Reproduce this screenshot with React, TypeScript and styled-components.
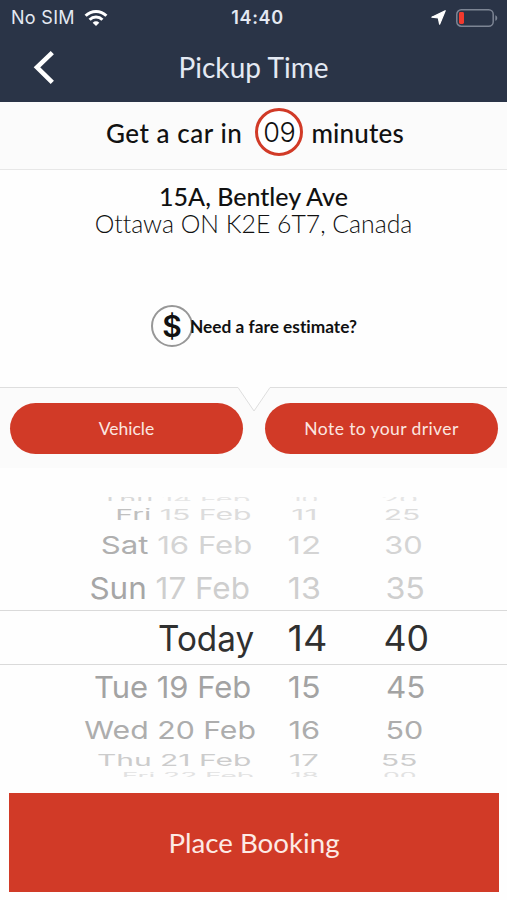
import React from 'react';
import styled, { createGlobalStyle } from 'styled-components';

const RED = '#d13a27';
const NAVY = '#2a3447';

const GlobalStyle = createGlobalStyle`
  * { box-sizing: border-box; }
  body { margin: 0; background: #fff; font-family: Lato, sans-serif; color: #111; }
  button { border: 0; font-family: inherit; cursor: pointer; }
`;

const Screen = styled.main`
  width: 507px;
  height: 900px;
  overflow: hidden;
  display: flex;
  flex-direction: column;
  background: #fefefe;
`;

const StatusBar = styled.div`
  height: 34px;
  flex: none;
  display: grid;
  grid-template-columns: 1fr auto 1fr;
  align-items: center;
  padding: 0 9px 0 11px;
  background: ${NAVY};
  color: #e4e9f2;
  font-family: Inter, sans-serif;
  font-size: 18px;
  line-height: 34px;
`;

const Carrier = styled.div`
  display: flex;
  align-items: center;
  gap: 9px;
  padding-top: 1px;
  letter-spacing: 0.3px;
`;

const Clock = styled.div`
  padding: 1px 0 0 6px;
  font-weight: 600;
  letter-spacing: 0.7px;
`;

const Indicators = styled.div`
  display: flex;
  justify-content: flex-end;
  align-items: center;
  gap: 10px;
`;

const NavBar = styled.header`
  height: 68px;
  flex: none;
  display: grid;
  grid-template-columns: 88px 1fr 88px;
  align-items: center;
  background: ${NAVY};
`;

const BackButton = styled.button`
  display: flex;
  padding: 0 0 0 32px;
  background: none;
`;

const Title = styled.h1`
  margin: 0;
  padding-bottom: 2px;
  text-align: center;
  font-size: 28px;
  font-weight: 400;
  line-height: 34px;
  letter-spacing: 0.05px;
  color: #e4e9f3;
`;

const EtaBar = styled.section`
  height: 68px;
  flex: none;
  display: flex;
  justify-content: center;
  padding: 6px 0 0 3px;
  background: #fbfbfb;
  border-bottom: 1px solid #e7e7e7;
  font-size: 26px;
  font-weight: 500;
  line-height: 50px;
`;

const EtaText = styled.span<{ $spacing: number }>`
  letter-spacing: ${(p) => p.$spacing}px;
`;

const EtaBadge = styled.span`
  width: 48px;
  height: 48px;
  margin: 0 8px 0 13px;
  border: 3px solid ${RED};
  border-radius: 50%;
  background: #fff;
  font-family: Inter, sans-serif;
  font-size: 27px;
  font-weight: 300;
  line-height: 43px;
  letter-spacing: -0.3px;
  text-align: center;
`;

const Address = styled.address`
  height: 117px;
  flex: none;
  padding-top: 12px;
  text-align: center;
  font-style: normal;
  font-size: 25px;
  line-height: 28px;
`;

const Street = styled.div`
  font-weight: 500;
`;

const City = styled.div`
  font-size: 24.8px;
  font-weight: 300;
  color: #111;
  font-variant-ligatures: none;
`;

const Fare = styled.button`
  height: 80px;
  flex: none;
  display: flex;
  justify-content: center;
  align-items: center;
  padding: 0 0 2px 1px;
  background: none;
  color: #111;
  font-size: 17.3px;
  font-weight: 700;
  font-variant-ligatures: none;
`;

const FareCoin = styled.span`
  width: 42px;
  height: 42px;
  margin-right: -3px;
  border: 2px solid #979797;
  border-radius: 50%;
  font-family: Inter, sans-serif;
  font-size: 30px;
  font-weight: 600;
  line-height: 39px;
  text-align: center;
`;

const Options = styled.section`
  height: 81px;
  margin-top: 20px;
  flex: none;
  background: #fbfbfb;
`;

const Notch = styled.svg`
  display: block;
  width: 507px;
  height: 26px;
`;

const OptionRow = styled.div`
  display: flex;
  gap: 22px;
  margin-top: -10px;
  padding: 0 9px 0 10px;
`;

const Pill = styled.button<{ $spacing?: string }>`
  flex: 1;
  height: 51px;
  padding: 0;
  border-radius: 26px;
  background: ${RED};
  color: #fbe6e0;
  font-size: 17.5px;
  letter-spacing: ${(p) => p.$spacing ?? '0'};
`;

const Picker = styled.section`
  height: 280px;
  flex: none;
  margin-top: 29px;
  overflow: hidden;
  font-family: Inter, sans-serif;
`;

const PickerRow = styled.div<{ $height: number; $offset?: number; $selected?: boolean }>`
  height: ${(p) => p.$height}px;
  padding-top: ${(p) => p.$offset ?? 0}px;
  display: grid;
  grid-template-columns: 254px 101px 101px;
  align-items: center;
  overflow: hidden;
  white-space: nowrap;
  font-size: ${(p) => (p.$selected ? 35 : 28)}px;
  line-height: 0;
  border: solid #dadada;
  border-width: ${(p) => (p.$selected ? '1px 0' : '0')};
`;

const DateCell = styled.span<{ $x: number; $y: number; $inset: number; $color: string }>`
  justify-self: end;
  margin-right: ${(p) => p.$inset}px;
  transform: scale(${(p) => p.$x}, ${(p) => p.$y});
  transform-origin: right center;
  color: ${(p) => p.$color};
`;

const Day = styled.span<{ $color: string }>`
  color: ${(p) => p.$color};
`;

const NumberCell = styled.span<{ $x: number; $y: number; $shift?: number; $color: string }>`
  justify-self: center;
  margin-left: ${(p) => p.$shift ?? 0}px;
  transform: scale(${(p) => p.$x}, ${(p) => p.$y});
  color: ${(p) => p.$color};
`;

const BookButton = styled.button`
  height: 99px;
  flex: none;
  margin: 16px 8px 0 9px;
  padding: 1px 0 0;
  background: ${RED};
  color: #fdeae5;
  font-size: 27.7px;
  line-height: 34px;
`;

type Slot = {
  day: string; date: string; hour: string; minute: string;
  height: number; offset?: number; x: number; y: number; inset: number;
  hx: number; hShift?: number; mx: number; mShift: number;
  dayColor: string; color: string; selected?: boolean;
};

const slots: Slot[] = [
  { day: 'Thu', date: '14 Feb', hour: '10', minute: '20', height: 4, x: 1.03, y: 0.36, inset: 4, hx: 0.95, mx: 1.08, mShift: -12, dayColor: '#d8d8d8', color: '#e6e6e6' },
  { day: 'Fri', date: '15 Feb', hour: '11', minute: '25', height: 28, x: 1.077, y: 0.54, inset: 2, hx: 1.15, mx: 1.07, mShift: -7, dayColor: '#c0c0c0', color: '#dcdcdc' },
  { day: 'Sat', date: '16 Feb', hour: '12', minute: '30', height: 32, x: 1.112, y: 0.87, inset: 2, hx: 1.18, mx: 1.1, mShift: -4, dayColor: '#afafaf', color: '#d4d4d4' },
  { day: 'Sun', date: '17 Feb', hour: '13', minute: '35', height: 49, offset: 5, x: 1.123, y: 1.08, inset: 4, hx: 1.15, mx: 1.15, mShift: 0, dayColor: '#a6a6a6', color: '#cecece' },
  { day: 'Today', date: '', hour: '14', minute: '40', height: 55, x: 0.95, y: 1, inset: 0, hx: 1.08, hShift: 5, mx: 1.02, mShift: 1, dayColor: '#303030', color: '#303030', selected: true },
  { day: 'Tue', date: '19 Feb', hour: '15', minute: '45', height: 44, x: 1.105, y: 1.08, inset: 3, hx: 1.15, mx: 1.12, mShift: 0, dayColor: '#a3a3a3', color: '#a3a3a3' },
  { day: 'Wed', date: '20 Feb', hour: '16', minute: '50', height: 42, x: 1.08, y: 0.88, inset: -2, hx: 1.1, hShift: -1, mx: 1.09, mShift: -3, dayColor: '#adadad', color: '#adadad' },
  { day: 'Thu', date: '21 Feb', hour: '17', minute: '55', height: 18, x: 1.07, y: 0.59, inset: 3, hx: 1.1, hShift: -1, mx: 1.08, mShift: -12, dayColor: '#cccccc', color: '#cccccc' },
  { day: 'Fri', date: '22 Feb', hour: '18', minute: '00', height: 8, offset: 5, x: 1.0, y: 0.3, inset: 0, hx: 1.0, mx: 0.95, mShift: -12, dayColor: '#e2e2e2', color: '#e2e2e2' },
];

const WifiIcon = () => (
  <svg width="24" height="18" viewBox="0 0 24 18" fill="none" stroke="#fff" strokeWidth="3">
    <path d="M1.6 6.8C7.4 1.1 16.6 1.1 22.4 6.8" />
    <path d="M5.6 10.8C9.2 7.2 14.8 7.2 18.4 10.8" />
    <path d="M8.7 13.7C10.6 11.9 13.4 11.9 15.3 13.7L12 17Z" fill="#fff" stroke="none" />
  </svg>
);

const LocationIcon = () => (
  <svg width="15" height="15" viewBox="0 0 15 15">
    <path d="M14.2 0.7L8.6 14.2L7.3 8L0.8 7.2Z" fill="#fff" stroke="#fff" strokeWidth="1.2" strokeLinejoin="round" />
  </svg>
);

const BatteryIcon = () => (
  <svg width="42" height="18" viewBox="0 0 42 18">
    <rect x="0.8" y="0.8" width="36.4" height="16.4" rx="4.5" fill="none" stroke="#7d8594" strokeWidth="1.5" />
    <rect x="3" y="3" width="5" height="12" rx="1.4" fill="#f23a2e" />
    <path d="M39.3 6.2C41.9 7 41.9 11 39.3 11.8Z" fill="#7d8594" />
  </svg>
);

const BackIcon = () => (
  <svg width="24" height="36" viewBox="0 0 24 36" fill="none" stroke="#fff" strokeWidth="4.6">
    <path d="M20.3 2.7L5 17.3L20.3 32.4" />
  </svg>
);

export default function App() {
  return (
    <>
      <GlobalStyle />
      <Screen>
        <StatusBar>
          <Carrier>No SIM <WifiIcon /></Carrier>
          <Clock>14:40</Clock>
          <Indicators><LocationIcon /><BatteryIcon /></Indicators>
        </StatusBar>
        <NavBar>
          <BackButton aria-label="Back"><BackIcon /></BackButton>
          <Title>Pickup Time</Title>
        </NavBar>
        <EtaBar>
          <EtaText $spacing={0.55}>Get a car in</EtaText>
          <EtaBadge>09</EtaBadge>
          <EtaText $spacing={0.2}>minutes</EtaText>
        </EtaBar>
        <Address>
          <Street>15A, Bentley Ave</Street>
          <City>Ottawa ON K2E 6T7, Canada</City>
        </Address>
        <Fare><FareCoin>$</FareCoin>Need a fare estimate?</Fare>
        <Options>
          <Notch viewBox="0 0 507 26">
            <path d="M0 0H507V0.5H270L254 24L238 0.5H0Z" fill="#fefefe" />
            <path d="M0 0.5H238L254 24L270 0.5H507" fill="#fefefe" stroke="#dedede" />
          </Notch>
          <OptionRow>
            <Pill>Vehicle</Pill>
            <Pill $spacing="0.4px">Note to your driver</Pill>
          </OptionRow>
        </Options>
        <Picker>
          {slots.map((s) => (
            <PickerRow key={s.hour} $height={s.height} $offset={s.offset} $selected={s.selected}>
              <DateCell $x={s.x} $y={s.y} $inset={s.inset} $color={s.color}>
                <Day $color={s.dayColor}>{s.day}</Day>{s.date && ` ${s.date}`}
              </DateCell>
              <NumberCell $x={s.hx} $y={s.y} $shift={s.hShift} $color={s.color}>{s.hour}</NumberCell>
              <NumberCell $x={s.mx} $y={s.y} $shift={s.mShift} $color={s.color}>{s.minute}</NumberCell>
            </PickerRow>
          ))}
        </Picker>
        <BookButton>Place Booking</BookButton>
      </Screen>
    </>
  );
}
